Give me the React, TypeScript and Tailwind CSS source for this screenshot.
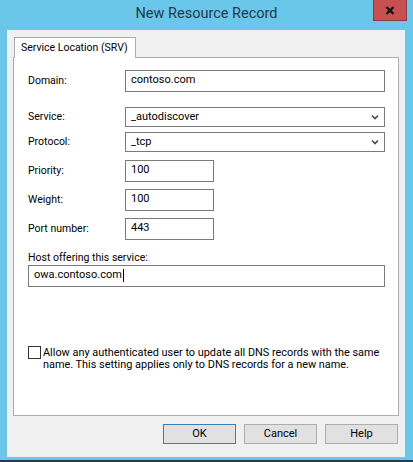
import React from 'react';

const Chevron: React.FC = () => (
    <svg width="8" height="6" viewBox="0 0 8 6" className="shrink-0">
        <path d="M1 1.5 L4 4.5 L7 1.5" fill="none" stroke="#4a4a4a" strokeWidth="1.6" />
    </svg>
);

const TextBox: React.FC<{ value: string; w: string; caret?: boolean }> = ({ value, w, caret }) => (
    <div className={`${w} h-[22px] border border-[#7a7a7a] bg-white flex items-center pl-[5px] pb-px text-[11px] text-black`}>
        <span>{value}</span>
        {caret && <span className="w-px h-[13px] bg-black ml-px" />}
    </div>
);

const ComboBox: React.FC<{ value: string }> = ({ value }) => (
    <div className="w-[260px] h-[20px] border border-[#7a7a7a] bg-white flex items-center justify-between pl-[5px] pr-[5px] text-[11px] text-black">
        <span>{value}</span>
        <Chevron />
    </div>
);

const Row: React.FC<{ label: string; mt: string; children: React.ReactNode }> = ({ label, mt, children }) => (
    <div className={`flex items-center ${mt}`}>
        <span className="w-[97px] text-black">{label}</span>
        {children}
    </div>
);

const DialogButton: React.FC<{ label: string; focused?: boolean }> = ({ label, focused }) => (
    <button
        className={`w-[73px] h-[20px] bg-[#e1e1e1] border text-[11px] text-black ${
            focused ? 'border-[#3c7fb1]' : 'border-[#adadad]'
        }`}
    >
        {label}
    </button>
);

export default function App() {
    return (
        <div className="w-[413px] h-[462px] flex flex-col bg-[#6ac7ea] font-['Roboto','Noto_Sans',sans-serif] text-[10.5px] overflow-hidden">
            {/* title bar */}
            <div className="h-[30px] flex items-start shrink-0">
                <div className="w-[40px]" />
                <div className="flex-1 text-center text-[14.5px] leading-[28px] text-[#1e3a4c]">New Resource Record</div>
                <button className="w-[34px] h-[21px] mr-[6px] bg-[#c75050] border border-t-0 border-[#8e3a3a] flex items-center justify-center">
                    <svg width="10" height="9" viewBox="0 0 10 9">
                        <path d="M1.5 1 L8.5 8 M8.5 1 L1.5 8" stroke="#141414" strokeWidth="2.4" />
                    </svg>
                </button>
            </div>

            {/* client area */}
            <div className="flex-1 pl-[7px] pr-[8px] flex flex-col">
                <div className="flex-1 bg-[#f0f0f0] pt-[7px] px-[6px] pb-[13px] flex flex-col">
                    <div className="ml-px w-[122px] h-[21px] -mb-px relative z-10 bg-white border border-b-0 border-[#adadad] pl-[6px] leading-[20px] text-black whitespace-nowrap">
                        Service Location (SRV)
                    </div>
                    <div className="h-[359px] bg-white border border-[#adadad] pl-[14px] pt-[12px] flex flex-col">
                        <Row label="Domain:" mt="mt-0">
                            <TextBox value="contoso.com" w="w-[260px]" />
                        </Row>
                        <Row label="Service:" mt="mt-[15px]">
                            <ComboBox value="_autodiscover" />
                        </Row>
                        <Row label="Protocol:" mt="mt-[5px]">
                            <ComboBox value="_tcp" />
                        </Row>
                        <Row label="Priority:" mt="mt-[8px]">
                            <TextBox value="100" w="w-[89px]" />
                        </Row>
                        <Row label="Weight:" mt="mt-[7px]">
                            <TextBox value="100" w="w-[89px]" />
                        </Row>
                        <Row label="Port number:" mt="mt-[7px]">
                            <TextBox value="443" w="w-[89px]" />
                        </Row>
                        <div className="mt-[10px] h-[15px] leading-[15px] text-black">Host offering this service:</div>
                        <TextBox value="owa.contoso.com" w="w-[357px]" caret />
                        <div className="mt-[59px] flex items-start">
                            <div className="w-[13px] h-[13px] border border-[#333333] bg-white shrink-0" />
                            <p className="ml-[2px] w-[345px] text-[10.9px] leading-[12px] pt-px text-black">
                                Allow any authenticated user to update all DNS records with the same name. This setting applies only to DNS records for a new name.
                            </p>
                        </div>
                    </div>
                    <div className="mt-[8px] mr-px flex justify-end gap-[8px]">
                        <DialogButton label="OK" focused />
                        <DialogButton label="Cancel" />
                        <DialogButton label="Help" />
                    </div>
                </div>
            </div>
            <div className="h-[3px] shrink-0" />
            <div className="h-[2px] bg-[#1f3e52] shrink-0" />
        </div>
    );
}
